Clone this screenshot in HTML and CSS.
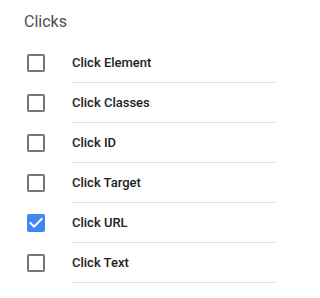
FILE: index.html
```html
<!DOCTYPE html>
<html lang="en">
<head>
<meta charset="utf-8">
<title>Clicks</title>
<link rel="stylesheet" href="styles.css">
</head>
<body>
<section class="group">
  <h2 class="group-title">Clicks</h2>
  <ul class="var-list">
    <li class="var-row">
      <span class="box"></span>
      <span class="label">Click Element</span>
    </li>
    <li class="var-row">
      <span class="box"></span>
      <span class="label">Click Classes</span>
    </li>
    <li class="var-row">
      <span class="box"></span>
      <span class="label">Click ID</span>
    </li>
    <li class="var-row">
      <span class="box"></span>
      <span class="label">Click Target</span>
    </li>
    <li class="var-row">
      <svg class="box-checked" width="18" height="18" viewBox="3 3 18 18" aria-hidden="true">
        <rect x="3" y="3" width="18" height="18" rx="2" fill="#4285f4"/>
        <path d="M10 17l-5-5 1.41-1.41L10 14.17l7.59-7.59L19 8z" fill="#ffffff"/>
      </svg>
      <span class="label">Click URL</span>
    </li>
    <li class="var-row">
      <span class="box"></span>
      <span class="label">Click Text</span>
    </li>
  </ul>
</section>
</body>
</html>
```

FILE: styles.css
```css
html, body {
  margin: 0;
  padding: 0;
  background: #ffffff;
}

body {
  font-family: Roboto, "Liberation Sans", Arial, sans-serif;
  color: #212121;
}

.group {
  width: 275px;
}

.group-title {
  margin: 0;
  padding: 12px 0 11px 24px;
  font-size: 16px;
  line-height: 20px;
  font-weight: 400;
  color: #4e4e4e;
}

.var-list {
  list-style: none;
  margin: 0;
  padding: 0;
}

.var-row {
  display: flex;
  align-items: center;
  padding-left: 27px;
  height: 40px;
}

.box {
  flex: none;
  box-sizing: border-box;
  width: 18px;
  height: 18px;
  border: 2px solid #757575;
  border-radius: 2px;
}

.box-checked {
  flex: none;
  display: block;
}

.label {
  flex: 1;
  margin-left: 27px;
  height: 39px;
  display: flex;
  align-items: center;
  border-bottom: 1px solid #e0e0e0;
  font-size: 13px;
  font-weight: 500;
  color: #212121;
}
```
